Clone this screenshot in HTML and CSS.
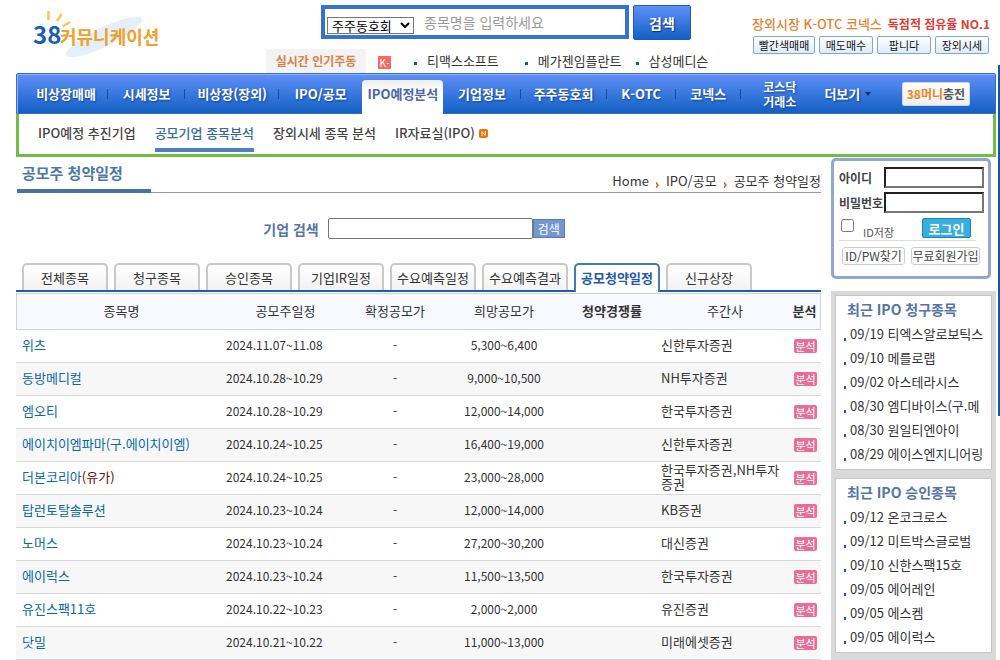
FILE: index.html
```html
<!DOCTYPE html>
<html lang="ko">
<head>
<meta charset="utf-8">
<title>공모주 청약일정 - 38커뮤니케이션</title>
<link rel="stylesheet" href="styles.css">
</head>
<body>
<div class="page">
  <header class="header">
    <a class="logo" href="#" aria-label="38커뮤니케이션">
      <svg width="134" height="52" viewBox="0 0 134 52">
        <ellipse cx="76" cy="28" rx="42" ry="9.500" transform="rotate(-26 76 28)" fill="#e3eff9"/>
        <g stroke="#f8cc50" stroke-width="2.600" fill="none">
          <path d="M20.500 2v9M33.500 5l-4.500 7M42 13l-7.500 4.500"/>
        </g>
        <text class="logo-num" x="5" y="35">38</text>
        <text class="logo-name" x="32" y="35">커뮤니케이션</text>
      </svg>
    </a>
    <div class="center">
      <form class="search">
        <div class="search-box">
          <select class="search-kind" aria-label="검색 구분"><option>주주동호회</option></select>
          <input class="search-input" type="text" placeholder="종목명을 입력하세요" aria-label="종목명">
        </div>
        <button class="search-btn" type="button">검색</button>
      </form>
      <div class="hot">
        <strong class="hot-title">실시간 인기주동</strong>
        <span class="hot-badge">K-</span>
        <ul class="hot-list">
          <li><a href="#">티맥스소프트</a></li>
          <li><a href="#">메가젠임플란트</a></li>
          <li><a href="#">삼성메디슨</a></li>
        </ul>
      </div>
    </div>
    <div class="promo">
      <p class="promo-text"><span class="promo-a">장외시장 K-OTC 코넥스</span><span class="promo-b">독점적 점유율 NO.1</span></p>
      <div class="promo-btns">
        <button type="button" class="wide">빨간색매매</button>
        <button type="button">매도매수</button>
        <button type="button">팝니다</button>
        <button type="button">장외시세</button>
      </div>
    </div>
  </header>

  <nav class="nav">
    <a href="#">비상장매매</a>
    <a href="#">시세정보</a>
    <a href="#">비상장(장외)</a>
    <a href="#" class="nosep">IPO/공모</a>
    <a href="#" class="on">IPO예정분석</a>
    <a href="#">기업정보</a>
    <a href="#">주주동호회</a>
    <a href="#">K-OTC</a>
    <a href="#">코넥스</a>
    <a href="#" class="nosep two">코스닥<br>거래소</a>
    <a href="#" class="nosep more">더보기<svg width="6" height="4" viewBox="0 0 6 4"><path d="M0 0h6L3 4z" fill="#12306e"/></svg></a>
    <button type="button" class="money"><span>38머니</span>충전</button>
  </nav>
  <div class="subnav">
    <a href="#">IPO예정 추진기업</a>
    <a href="#" class="on">공모기업 종목분석</a>
    <a href="#">장외시세 종목 분석</a>
    <a href="#">IR자료실(IPO)<svg width="9" height="9" viewBox="0 0 9 9"><rect width="9" height="9" rx="2" fill="#e8720c"/><path d="M3 7V2.500L6.200 6.500V2" stroke="#fff2a8" fill="none"/></svg></a>
  </div>

  <div class="body">
    <main class="main">
      <div class="title-row">
        <h1>공모주 청약일정</h1>
        <div class="crumbs">
          <a href="#">Home</a>
          <svg width="3" height="6" viewBox="0 0 3 6"><path d="M0 0.500L2 3L0 5.500" stroke="#d8592a" stroke-width="1.500" fill="none"/></svg>
          <a href="#">IPO/공모</a>
          <svg width="3" height="6" viewBox="0 0 3 6"><path d="M0 0.500L2 3L0 5.500" stroke="#d8592a" stroke-width="1.500" fill="none"/></svg>
          <span>공모주 청약일정</span>
        </div>
      </div>
      <form class="corp">
        <label for="corp">기업 검색</label>
        <input id="corp" type="text">
        <button type="button">검색</button>
      </form>
      <div class="tabs">
        <a href="#">전체종목</a>
        <a href="#">청구종목</a>
        <a href="#">승인종목</a>
        <a href="#">기업IR일정</a>
        <a href="#">수요예측일정</a>
        <a href="#">수요예측결과</a>
        <a href="#" class="on">공모청약일정</a>
        <a href="#">신규상장</a>
      </div>
      <table class="list">
        <colgroup><col class="c-name"><col class="c-date"><col class="c-fix"><col class="c-hope"><col class="c-rate"><col class="c-firm"><col class="c-link"></colgroup>
        <thead>
          <tr><th>종목명</th><th>공모주일정</th><th>확정공모가</th><th>희망공모가</th><th class="b">청약경쟁률</th><th>주간사</th><th class="b">분석</th></tr>
        </thead>
        <tbody>
          <tr><td><a href="#">위츠</a></td><td>2024.11.07~11.08</td><td>-</td><td>5,300~6,400</td><td></td><td>신한투자증권</td><td><button type="button">분석</button></td></tr>
          <tr><td><a href="#">동방메디컬</a></td><td>2024.10.28~10.29</td><td>-</td><td>9,000~10,500</td><td></td><td>NH투자증권</td><td><button type="button">분석</button></td></tr>
          <tr><td><a href="#">엠오티</a></td><td>2024.10.28~10.29</td><td>-</td><td>12,000~14,000</td><td></td><td>한국투자증권</td><td><button type="button">분석</button></td></tr>
          <tr><td><a href="#">에이치이엠파마(구.에이치이엠)</a></td><td>2024.10.24~10.25</td><td>-</td><td>16,400~19,000</td><td></td><td>신한투자증권</td><td><button type="button">분석</button></td></tr>
          <tr><td><a href="#">더본코리아<span class="mk">(유가)</span></a></td><td>2024.10.24~10.25</td><td>-</td><td>23,000~28,000</td><td></td><td>한국투자증권,NH투자증권</td><td><button type="button">분석</button></td></tr>
          <tr><td><a href="#">탑런토탈솔루션</a></td><td>2024.10.23~10.24</td><td>-</td><td>12,000~14,000</td><td></td><td>KB증권</td><td><button type="button">분석</button></td></tr>
          <tr><td><a href="#">노머스</a></td><td>2024.10.23~10.24</td><td>-</td><td>27,200~30,200</td><td></td><td>대신증권</td><td><button type="button">분석</button></td></tr>
          <tr><td><a href="#">에이럭스</a></td><td>2024.10.23~10.24</td><td>-</td><td>11,500~13,500</td><td></td><td>한국투자증권</td><td><button type="button">분석</button></td></tr>
          <tr><td><a href="#">유진스팩11호</a></td><td>2024.10.22~10.23</td><td>-</td><td>2,000~2,000</td><td></td><td>유진증권</td><td><button type="button">분석</button></td></tr>
          <tr><td><a href="#">닷밀</a></td><td>2024.10.21~10.22</td><td>-</td><td>11,000~13,000</td><td></td><td>미래에셋증권</td><td><button type="button">분석</button></td></tr>
        </tbody>
      </table>
    </main>

    <aside class="side">
      <form class="login">
        <div class="field"><label for="uid">아이디</label><input id="uid" type="text"></div>
        <div class="field"><label for="upw">비밀번호</label><input id="upw" type="password"></div>
        <div class="save">
          <input id="keep" type="checkbox"><label for="keep">ID저장</label>
          <button type="button">로그인</button>
        </div>
        <div class="links">
          <button type="button">ID/PW찾기</button>
          <button type="button">무료회원가입</button>
        </div>
      </form>
      <div class="recent">
        <section>
          <h2>최근 IPO 청구종목</h2>
          <ul>
            <li><a href="#">09/19 티엑스알로보틱스</a></li>
            <li><a href="#">09/10 메를로랩</a></li>
            <li><a href="#">09/02 아스테라시스</a></li>
            <li><a href="#">08/30 엠디바이스(구.메</a></li>
            <li><a href="#">08/30 원일티엔아이</a></li>
            <li><a href="#">08/29 에이스엔지니어링</a></li>
          </ul>
        </section>
        <section>
          <h2>최근 IPO 승인종목</h2>
          <ul>
            <li><a href="#">09/12 온코크로스</a></li>
            <li><a href="#">09/12 미트박스글로벌</a></li>
            <li><a href="#">09/10 신한스팩15호</a></li>
            <li><a href="#">09/05 에어레인</a></li>
            <li><a href="#">09/05 에스켐</a></li>
            <li><a href="#">09/05 에이럭스</a></li>
          </ul>
        </section>
      </div>
    </aside>
  </div>
</div>
<div class="edge"></div>
</body>
</html>
```

FILE: styles.css
```css
* { box-sizing: border-box; }
body {
  margin: 0;
  background: #fff;
  color: #333;
  font-family: "Noto Sans CJK KR", sans-serif;
  font-size: 13px;
  line-height: 14px;
}
a { color: inherit; text-decoration: none; }
ul, h1, h2, p { margin: 0; padding: 0; list-style: none; }
button, input, select { font-family: inherit; margin: 0; }
button { cursor: pointer; padding: 0; white-space: nowrap; }
.page { padding: 0 4px 0 16px; }

/* header */
.header { display: grid; grid-template-columns: 250px 1fr 246px; height: 73px; }
.logo { padding: 9px 0 0 12px; }
.logo svg { display: block; }
.logo-num { font-size: 24px; font-weight: 700; fill: #1c5cb4; }
.logo-name { font-size: 18px; font-weight: 700; fill: #f0a02c; }
.center { display: flex; flex-direction: column; justify-content: space-between; }
.search { display: flex; gap: 4px; padding: 5px 0 0 55px; }
.search-box {
  display: flex; align-items: center; gap: 10px;
  width: 308px; height: 34px; padding: 0 2px;
  border: 4px solid #3673cc;
}
.search-kind {
  appearance: none;
  width: 87px; height: 17px; margin-top: 6px; padding: 0 0 0 4px;
  border: 1px solid #767676; border-radius: 0; color: #000; font-size: 13px; line-height: 15px;
  background: #fff url("data:image/svg+xml,%3Csvg xmlns='http://www.w3.org/2000/svg' width='10' height='6'%3E%3Cpath d='M1 1l4 4 4-4' fill='none' stroke='%23000' stroke-width='2'/%3E%3C/svg%3E") no-repeat right 3px center;
}
.search-input { flex: 1; min-width: 0; padding: 0; border: 0; outline: 0; font-size: 14px; }
.search-input::placeholder { color: #999; }
.search-btn {
  width: 58px; height: 35px; border: 1px solid #1c5cb8; border-radius: 2px;
  background: linear-gradient(#5f90f8, #1360c4);
  color: #fff; font-size: 14px; font-weight: 700; text-shadow: 1px 1px 1px #0c2f70;
}
.hot { display: flex; align-items: center; height: 24px; white-space: nowrap; }
.hot-title {
  width: 100px; height: 24px; background: #f3f3f3; color: #dd8044;
  font-size: 12px; line-height: 24px; text-align: center;
}
.hot-badge {
  width: 13px; height: 13px; margin: 2px 23px 0 12px; background: #f76864;
  color: #fff; font-size: 10px; line-height: 13px; text-align: center;
}
.hot-list { display: flex; gap: 26px; }
.hot-list li { display: flex; align-items: center; gap: 10px; }
.hot-list li::before { content: ""; width: 3px; height: 3px; margin-top: 4px; background: #145a8c; }
.hot-list li:last-child { margin-left: -12px; }
.promo { padding: 15px 6px 0 0; }
.promo-text { display: flex; justify-content: flex-end; align-items: center; gap: 6px; height: 18px; white-space: nowrap; font-weight: 500; }
.promo-a { color: #ea8030; font-size: 13px; }
.promo-b { color: #e03c30; font-size: 12px; font-weight: 700; }
.promo-btns { display: flex; justify-content: flex-end; gap: 4px; padding: 3px 1px 0 0; }
.promo-btns button {
  width: 54px; height: 18px; border: 1px solid #7ea8cc; border-radius: 2px;
  background: linear-gradient(#fff, #dcebf8); color: #111; font-size: 11px; line-height: 14px;
}
.promo-btns .wide { width: 62px; }

/* navigation */
.nav {
  display: grid; align-items: stretch;
  grid-template-columns: 84fr 77fr 94fr 83fr 81fr 77fr 86fr 69fr 65fr 78fr 58fr 118fr;
  height: 41px; padding-left: 7px;
  border: 1px solid #3c6cc0; border-radius: 2px 2px 0 0;
  background: linear-gradient(#6090f8, #1360c4);
  box-shadow: inset 0 1px #8fb4fa, inset 1px 0 #8fb4fa;
}
.nav a {
  display: flex; align-items: center; justify-content: center; position: relative;
  color: #fff; font-size: 13px; font-weight: 700; text-align: center; white-space: nowrap;
  line-height: 14px; text-shadow: 1px 1px 2px #123f90;
}
.nav a:not(.nosep, .on)::after {
  content: ""; position: absolute; right: 0; top: 15px; width: 1px; height: 10px; background: #204898;
}
.nav .on {
  margin: 6px 0 -1px; background: linear-gradient(#eee, #fff 12px); padding-bottom: 6px;
  border-radius: 4px 4px 0 0; color: #4868a8; text-shadow: none;
}
.nav .two { font-size: 12px; line-height: 15px; }
.nav .more { gap: 5px; }
.money {
  place-self: center; width: 68px; height: 24px; border: 1px solid #d5d5d5; border-radius: 2px;
  background: linear-gradient(#fff, #eee); color: #555; font-size: 12px; font-weight: 700;
}
.money span { color: #f08418; }
.subnav {
  display: flex; gap: 19px; height: 43px; padding: 0 19px;
  border: solid #74bc48; border-width: 0 3px 3px;
  font-weight: 500; color: #444;
}
.subnav a { display: flex; align-items: center; gap: 4px; height: 38px; border-bottom: 4px solid transparent; padding-top: 4px; white-space: nowrap; }
.subnav .on { border-color: #4c7fc4; color: #3168ac; }

/* main column */
.body { display: flex; gap: 10px; }
.main { flex: 1; min-width: 0; }
.title-row { display: flex; justify-content: space-between; align-items: flex-end; height: 36px; border-bottom: 1px solid #999; margin-left: 1px; }
.title-row h1 {
  width: 134px; height: 36px; padding: 5px 5px 0; border-bottom: 4px solid #46729e;
  margin-bottom: -1px; color: #4a78aa; font-size: 15px; line-height: 22px; font-weight: 700; white-space: nowrap;
}
.crumbs { display: flex; align-items: center; gap: 7px; padding-bottom: 4px; font-size: 13px; }
.crumbs svg { margin-top: 8px; }
.corp { display: flex; align-items: center; justify-content: center; height: 46px; padding: 25px 9px 0 0; }
.corp label { color: #5674a8; font-size: 14px; font-weight: 700; margin-right: 9px; }
.corp input { width: 205px; height: 21px; border: 1px solid #767676; border-radius: 2px; }
.corp button { width: 32px; height: 19px; border: 1px solid #587cb8; background: #7398d0; color: #fff; font-size: 12px; line-height: 14px; }
.tabs { display: flex; gap: 6px; height: 29px; margin-top: 24px; padding-left: 6px; border-bottom: 2px solid #2458a8; }
.tabs a {
  width: 86px; height: 27px; padding-top: 1px; border: 2px solid #c8c8c8; border-bottom: 0; border-radius: 5px 5px 0 0;
  background: linear-gradient(#fff, #f2f2f2); font-size: 13px; line-height: 24px; text-align: center; white-space: nowrap;
}
.tabs .on { height: 29px; border-color: #4478b8; background: #fff; color: #2458a8; font-weight: 700; }
.list { width: 100%; margin-top: 1px; table-layout: fixed; border-collapse: separate; border-spacing: 0; }
.c-name { width: 210px; }
.c-date { width: 119px; }
.c-fix { width: 100px; }
.c-hope { width: 118px; }
.c-rate { width: 98px; }
.c-firm { width: 128px; }
.list th { height: 37px; padding: 0 0 2px; background: #f7f9fe; border: solid #ccd2dc; border-width: 1px 0; font-weight: 400; white-space: nowrap; }
.list th:first-child { border-left-width: 1px; }
.list th:last-child { border-right-width: 1px; }
.list .b { font-weight: 700; }
.list td { height: 33px; padding: 0 0 2px; border-bottom: 1px solid #d8d8d8; text-align: center; font-size: 12px; }
.list tr:nth-child(even) td { background: #f7f7f7; }
.list td:first-child { padding-left: 6px; text-align: left; color: #0868ac; font-size: 13px; }
.list td:nth-child(2) { text-align: left; white-space: nowrap; }
.list td:nth-child(6) { text-align: left; font-size: 13px; word-break: break-all; }
.mk { color: #700808; }
.list button { display: block; width: 23px; height: 14px; margin: 1px 0 0 5px; border: 0; border-radius: 2px; background: #ea6c98; color: #fff; font-size: 11px; line-height: 14px; }

/* side column */
.side { width: 165px; flex: none; margin-top: 1px; }
.login { width: 160px; height: 121px; padding: 6px 4px 0 5px; border: 3px solid #90a8d0; border-radius: 5px; }
.field { display: flex; align-items: center; justify-content: space-between; height: 21px; margin-bottom: 4px; white-space: nowrap; font-size: 12px; font-weight: 700; color: #444; }
.field label { width: 45px; flex: none; }
.field input { width: 100px; height: 21px; border: 2px inset #767676; background: #fff; }
.save { display: flex; align-items: flex-start; height: 24px; padding: 1px 0 0 2px; margin-right: 8px; border-bottom: 1px solid #ddd; font-size: 11px; }
.save input { width: 13px; height: 13px; margin-top: 1px; }
.save label { margin: 7px 0 0 9px; color: #555; }
.save button { width: 49px; height: 20px; margin-left: auto; margin-right: 5px; border: 1px solid #1c84b0; border-radius: 2px; background: #38aee0; color: #fff; font-size: 13px; line-height: 17px; font-weight: 700; }
.links { display: flex; gap: 6px; padding: 6px 0 0 3px; }
.links button { width: 63px; height: 18px; border: 1px solid #ccc; border-radius: 3px; background: #fff; color: #444; font-size: 12px; line-height: 14px; }
.links button + button { width: 69px; }
.recent { margin-top: 12px; padding: 4px 4px 7px; background: #d9d9d9; }
.recent section { height: 175px; border: 1px solid #c6c6c6; background: #fff; padding: 2px 0 0 8px; overflow: hidden; }
.recent section + section { margin-top: 8px; }
.recent h2 { padding: 0 0 2px 3px; color: #5474ac; font-size: 14px; line-height: 22px; font-weight: 700; }
.recent li { display: flex; align-items: center; gap: 4px; height: 24px; white-space: nowrap; }
.recent li::before { content: ""; width: 2px; height: 3px; margin-top: 10px; background: #145a8c; }

/* banner edge beyond the right side of the page */
.edge { position: absolute; right: 0; top: 65px; width: 2px; height: 351px; background: #1458a4; }
```
